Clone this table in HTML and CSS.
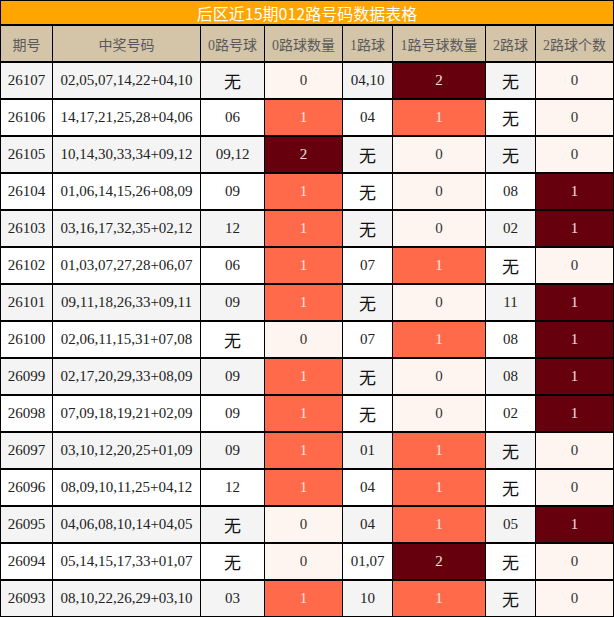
FILE: index.html
```html
<!DOCTYPE html>
<html lang="zh">
<head>
<meta charset="utf-8">
<title>后区近15期012路号码数据表格</title>
<link rel="stylesheet" href="styles.css">
</head>
<body>
<div class="wrap">
  <div class="title">后区近15期012路号码数据表格</div>
  <table class="grid">
    <colgroup>
      <col class="c1"><col class="c2"><col class="c3"><col class="c4"><col class="c5"><col class="c6"><col class="c7"><col class="c8">
    </colgroup>
    <thead>
      <tr><th>期号</th><th>中奖号码</th><th>0路号球</th><th>0路球数量</th><th>1路球</th><th>1路号球数量</th><th>2路球</th><th>2路球个数</th></tr>
    </thead>
    <tbody>
      <tr class="odd"><td>26107</td><td>02,05,07,14,22+04,10</td><td class="none">无</td><td class="h0">0</td><td>04,10</td><td class="h2">2</td><td class="none">无</td><td class="h0">0</td></tr>
      <tr><td>26106</td><td>14,17,21,25,28+04,06</td><td>06</td><td class="h1">1</td><td>04</td><td class="h1">1</td><td class="none">无</td><td class="h0">0</td></tr>
      <tr class="odd"><td>26105</td><td>10,14,30,33,34+09,12</td><td>09,12</td><td class="h2">2</td><td class="none">无</td><td class="h0">0</td><td class="none">无</td><td class="h0">0</td></tr>
      <tr><td>26104</td><td>01,06,14,15,26+08,09</td><td>09</td><td class="h1">1</td><td class="none">无</td><td class="h0">0</td><td>08</td><td class="h2">1</td></tr>
      <tr class="odd"><td>26103</td><td>03,16,17,32,35+02,12</td><td>12</td><td class="h1">1</td><td class="none">无</td><td class="h0">0</td><td>02</td><td class="h2">1</td></tr>
      <tr><td>26102</td><td>01,03,07,27,28+06,07</td><td>06</td><td class="h1">1</td><td>07</td><td class="h1">1</td><td class="none">无</td><td class="h0">0</td></tr>
      <tr class="odd"><td>26101</td><td>09,11,18,26,33+09,11</td><td>09</td><td class="h1">1</td><td class="none">无</td><td class="h0">0</td><td>11</td><td class="h2">1</td></tr>
      <tr><td>26100</td><td>02,06,11,15,31+07,08</td><td class="none">无</td><td class="h0">0</td><td>07</td><td class="h1">1</td><td>08</td><td class="h2">1</td></tr>
      <tr class="odd"><td>26099</td><td>02,17,20,29,33+08,09</td><td>09</td><td class="h1">1</td><td class="none">无</td><td class="h0">0</td><td>08</td><td class="h2">1</td></tr>
      <tr><td>26098</td><td>07,09,18,19,21+02,09</td><td>09</td><td class="h1">1</td><td class="none">无</td><td class="h0">0</td><td>02</td><td class="h2">1</td></tr>
      <tr class="odd"><td>26097</td><td>03,10,12,20,25+01,09</td><td>09</td><td class="h1">1</td><td>01</td><td class="h1">1</td><td class="none">无</td><td class="h0">0</td></tr>
      <tr><td>26096</td><td>08,09,10,11,25+04,12</td><td>12</td><td class="h1">1</td><td>04</td><td class="h1">1</td><td class="none">无</td><td class="h0">0</td></tr>
      <tr class="odd"><td>26095</td><td>04,06,08,10,14+04,05</td><td class="none">无</td><td class="h0">0</td><td>04</td><td class="h1">1</td><td>05</td><td class="h2">1</td></tr>
      <tr><td>26094</td><td>05,14,15,17,33+01,07</td><td class="none">无</td><td class="h0">0</td><td>01,07</td><td class="h2">2</td><td class="none">无</td><td class="h0">0</td></tr>
      <tr class="odd"><td>26093</td><td>08,10,22,26,29+03,10</td><td>03</td><td class="h1">1</td><td>10</td><td class="h1">1</td><td class="none">无</td><td class="h0">0</td></tr>
    </tbody>
  </table>
</div>
</body>
</html>
```

FILE: styles.css
```css
html, body {
  margin: 0;
  padding: 0;
  background: #ffffff;
}

.wrap {
  width: 614px;
}

.title {
  box-sizing: border-box;
  height: 26px;
  background: #ffa500;
  color: #ffffff;
  border: 1px solid #000;
  border-bottom: 2px solid #000;
  font-family: "Noto Sans CJK SC", "Noto Sans", sans-serif;
  font-size: 16px;
  line-height: 24px;
  text-align: center;
  overflow: hidden;
}

.grid {
  width: 614px;
  table-layout: fixed;
  border-collapse: separate;
  border-spacing: 0;
  font-family: "Liberation Serif", "Noto Sans CJK SC", serif;
}

.c1 { width: 53px; }
.c2 { width: 148px; }
.c3 { width: 64px; }
.c4 { width: 78px; }
.c5 { width: 50px; }
.c6 { width: 93px; }
.c7 { width: 50px; }
.c8 { width: 78px; }

.grid th,
.grid td {
  box-sizing: border-box;
  padding: 0;
  text-align: center;
  border-right: 1px solid #000;
  border-bottom: 2px solid #000;
  white-space: nowrap;
  overflow: hidden;
}

.grid th:first-child,
.grid td:first-child {
  border-left: 1px solid #000;
}

.grid th {
  height: 37px;
  background: #d4c5a8;
  color: #5a5a5a;
  font-weight: normal;
  font-size: 14px;
}

.grid td {
  height: 37px;
  background: #ffffff;
  color: #222222;
  font-size: 15px;
}

.grid tr.odd td {
  background: #f4f4f4;
}

.grid td.none {
  font-size: 17px;
  color: #111111;
}

.grid td.h0,
.grid tr.odd td.h0 {
  background: #fff5f0;
  color: #333333;
}

.grid td.h1,
.grid tr.odd td.h1 {
  background: #ff6a4a;
  color: #ffe8e0;
}

.grid td.h2,
.grid tr.odd td.h2 {
  background: #67000d;
  color: #f0e0e0;
}
```
